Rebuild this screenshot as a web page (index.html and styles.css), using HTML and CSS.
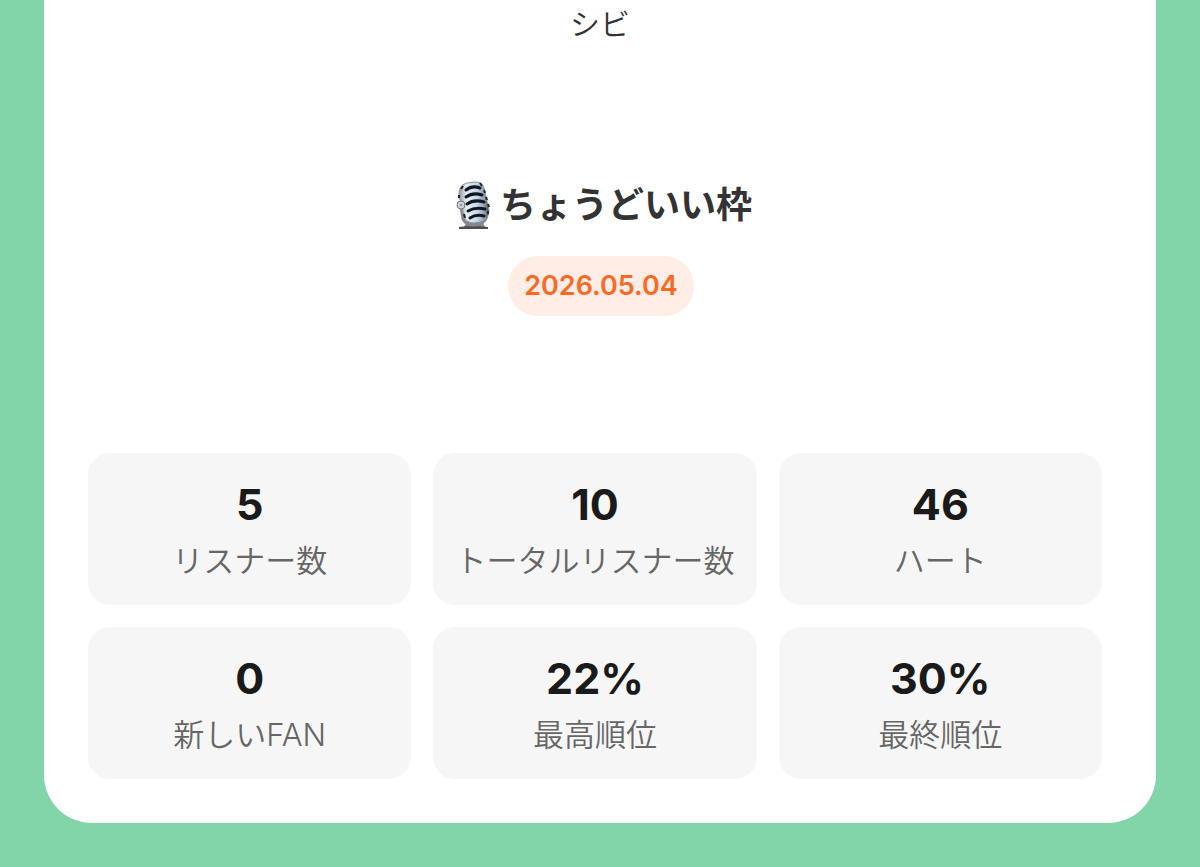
FILE: index.html
```
<!DOCTYPE html>
<html lang="ja">
<head>
  <meta charset="UTF-8">
  <meta name="viewport" content="width=device-width, initial-scale=1">
  <title>ちょうどいい枠</title>
  <link rel="stylesheet" href="styles.css">
</head>
<body>
  <main class="card">
    <p class="name">シビ</p>
    <h1 class="title">
      <svg class="mic" viewBox="0 0 40 52" aria-hidden="true">
        <defs>
          <linearGradient id="metal" x1="0" y1="0" x2="1" y2="0">
            <stop offset="0" stop-color="#8c9399"/>
            <stop offset=".25" stop-color="#e6eef6"/>
            <stop offset=".6" stop-color="#c6d8ec"/>
            <stop offset=".85" stop-color="#8e9cab"/>
            <stop offset="1" stop-color="#4a4e54"/>
          </linearGradient>
        </defs>
        <!-- stand -->
        <path d="M15 42h15l3 6H12z" fill="#85878b"/>
        <path d="M7 48q14-2 29 0v2H7z" fill="#4c4d52"/>
        <path d="M9 27l2 13q3 6 11 6 10 0 13-9" fill="none" stroke="#85878c" stroke-width="3"/>
        <!-- head -->
        <path d="M7 17Q6 6 15 4l9-1q6 0 8 6l5 22q0 10-9 12l-6 1q-8 0-10-7z" fill="url(#metal)" stroke="#8b959e"/>
        <path d="M14 11q6-5 14-2M14 18q7-5 16-2M15 25q7-5 17-2M16 32q7-4 17-2M18 39q6-4 14-2" fill="none" stroke="#10161d" stroke-width="3" stroke-linecap="round"/>
        <path d="M9 10l2-3M7 16v3M28 4l2 3M32 11l1 3M34 18l1 3M36 25l1 3M36 32v3M12 35l1 4" stroke="#202328" stroke-width="2"/>
        <circle cx="9" cy="26" r="4" fill="#cfd1d3" stroke="#74777b"/>
        <circle cx="9" cy="26" r="1" fill="#777a7e"/>
      </svg>
      <span>ちょうどいい枠</span>
    </h1>
    <time class="date" datetime="2026-05-04">2026.05.04</time>
    <dl class="stats">
      <div class="stat">
        <dt>リスナー数</dt>
        <dd>5</dd>
      </div>
      <div class="stat">
        <dt>トータルリスナー数</dt>
        <dd>10</dd>
      </div>
      <div class="stat">
        <dt>ハート</dt>
        <dd>46</dd>
      </div>
      <div class="stat">
        <dt>新しいFAN</dt>
        <dd>0</dd>
      </div>
      <div class="stat">
        <dt>最高順位</dt>
        <dd>22%</dd>
      </div>
      <div class="stat">
        <dt>最終順位</dt>
        <dd>30%</dd>
      </div>
    </dl>
  </main>
</body>
</html>
```
FILE: styles.css
```
body {
  margin: 0;
  padding: 0 44px 44px;
  background: #82d5a8;
  color: #333;
  font-family: Inter, "Noto Sans CJK JP", sans-serif;
}
p, h1, dl, dt, dd {
  margin: 0;
}
.card {
  display: flex;
  flex-direction: column;
  align-items: center;
  padding: 0 54px 44px 44px;
  background: #fff;
  border-radius: 0 0 48px 48px;
}
.name {
  margin-left: 10px;
  font-size: 30px;
  font-weight: 350;
  line-height: 48px;
}
.title {
  display: flex;
  align-items: center;
  gap: 8px;
  margin: 129px 0 23px 14px;
  font-size: 36px;
  font-weight: 700;
  line-height: 56px;
}
.mic {
  width: 40px;
  height: 52px;
}
.date {
  margin-left: 12px;
  padding: 0 16px;
  border-radius: 30px;
  background: #ffede6;
  color: #f96a26;
  font-size: 27px;
  font-weight: 600;
  line-height: 60px;
}
.stats {
  display: grid;
  grid-template-columns: repeat(3, minmax(0, 1fr));
  gap: 22px;
  align-self: stretch;
  margin-top: 137px;
}
.stat {
  display: flex;
  flex-direction: column-reverse;
  gap: 8px;
  padding: 24px 16px 22px;
  border-radius: 22px;
  background: #f6f6f6;
  text-align: center;
}
.stat dt {
  color: #666;
  font-size: 31px;
  font-weight: 350;
  line-height: 44px;
  white-space: nowrap;
}
.stat dd {
  color: #1a1a1a;
  font-size: 43px;
  font-weight: 700;
  line-height: 54px;
}
```
